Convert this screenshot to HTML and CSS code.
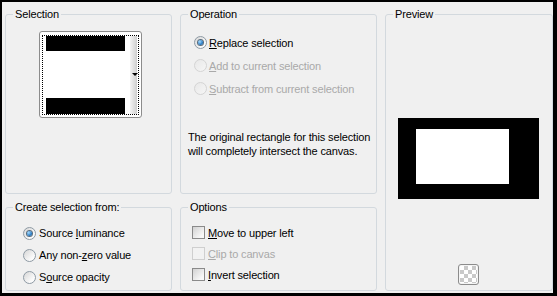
FILE: index.html
```html
<!DOCTYPE html>
<html>
<head>
<meta charset="utf-8">
<link rel="stylesheet" href="styles.css">
</head>
<body>
<div class="frame">
  <div class="layout">
    <fieldset class="group g-selection">
      <legend>Selection</legend>
      <div class="selbox">
        <div class="focus">
          <div class="bars">
            <div class="bar bar-top"></div>
            <div class="bar-mid"></div>
            <div class="bar bar-bottom"></div>
          </div>
          <div class="strip"><span class="arrow"></span></div>
        </div>
      </div>
    </fieldset>

    <fieldset class="group g-operation">
      <legend>Operation</legend>
      <div class="rows op-rows">
        <div class="row"><span class="radio checked"></span><span class="lbl"><u>R</u>eplace selection</span></div>
        <div class="row disabled"><span class="radio"></span><span class="lbl"><u>A</u>dd to current selection</span></div>
        <div class="row disabled"><span class="radio"></span><span class="lbl"><u>S</u>ubtract from current selection</span></div>
      </div>
      <p class="note">The original rectangle for this selection<br>will completely intersect the canvas.</p>
    </fieldset>

    <fieldset class="group g-preview">
      <legend>Preview</legend>
      <div class="pv-canvas"><div class="pv-inner"></div></div>
      <div class="checker-btn"><span class="checker"></span></div>
    </fieldset>

    <fieldset class="group g-create">
      <legend>Create selection from:</legend>
      <div class="rows create-rows">
        <div class="row"><span class="radio checked"></span><span class="lbl">Source <u>l</u>uminance</span></div>
        <div class="row"><span class="radio"></span><span class="lbl">Any non-<u>z</u>ero value</span></div>
        <div class="row"><span class="radio"></span><span class="lbl">S<u>o</u>urce opacity</span></div>
      </div>
    </fieldset>

    <fieldset class="group g-options">
      <legend>Options</legend>
      <div class="rows opt-rows">
        <div class="row"><span class="check"></span><span class="lbl"><u>M</u>ove to upper left</span></div>
        <div class="row disabled"><span class="check"></span><span class="lbl"><u>C</u>lip to canvas</span></div>
        <div class="row"><span class="check"></span><span class="lbl"><u>I</u>nvert selection</span></div>
      </div>
    </fieldset>
  </div>
</div>
</body>
</html>
```

FILE: styles.css
```css
html, body {
  margin: 0;
  padding: 0;
  background: #000;
}

.frame {
  width: 557px;
  height: 296px;
  box-sizing: border-box;
  border-style: solid;
  border-color: #000;
  border-width: 2px 4px 3px 2px;
  background: #f0f0f0;
  font-family: "Liberation Sans", Arial, sans-serif;
  font-size: 11px;
  letter-spacing: -0.15px;
  color: #000;
}

.layout {
  display: grid;
  grid-template-columns: 167px 197px 168px;
  grid-template-rows: 187px 91px;
  column-gap: 8px;
  row-gap: 6px;
  padding: 5px 0 0 3px;
}

.group {
  margin: 0;
  padding: 0;
  min-width: 0;
  border: 1px solid #d3d9de;
  border-radius: 3px;
}

.group legend {
  font-size: 11px;
  line-height: 14px;
  padding: 0 2px;
  margin-left: 7px;
}

.g-selection { grid-column: 1; grid-row: 1; }
.g-operation { grid-column: 2; grid-row: 1; }
.g-preview { grid-column: 3; grid-row: 1 / span 2; }
.g-create { grid-column: 1; grid-row: 2; }
.g-options { grid-column: 2; grid-row: 2; }

/* selection widget */
.selbox {
  width: 103px;
  height: 87px;
  box-sizing: border-box;
  margin: 10px 0 0 33px;
  border: 1px solid #8c8c8c;
  border-radius: 3px;
  background: #fff;
  padding: 3px 2px 2px 2px;
}

.focus {
  box-sizing: border-box;
  width: 97px;
  height: 80px;
  border: 1px dotted #000;
  display: flex;
}

.bars {
  width: 79px;
  margin-left: 3px;
  display: flex;
  flex-direction: column;
}

.bar { background: #000; }
.bar-top { height: 15px; }
.bar-mid { height: 47px; background: #fff; }
.bar-bottom { height: 16px; }

.strip {
  width: 7px;
  margin-left: 5px;
  background: linear-gradient(to right, #f4f4f4, #cfcfcf);
  position: relative;
}

.arrow {
  position: absolute;
  left: 2px;
  top: 37px;
  width: 0;
  height: 0;
  border-left: 3px solid transparent;
  border-right: 3px solid transparent;
  border-top: 3px solid #000;
}

/* rows */
.rows { display: flex; flex-direction: column; }
.row { display: flex; align-items: center; white-space: nowrap; }
.row.disabled .lbl { color: #a9a9a9; }

.op-rows { padding: 10px 0 0 13px; }
.op-rows .row { height: 23px; gap: 2px; }

.create-rows { padding: 8px 0 0 17px; }
.create-rows .row { height: 22px; gap: 3px; }

.opt-rows { padding: 8px 0 0 11px; }
.opt-rows .row { height: 21px; gap: 3px; }

.radio {
  width: 13px;
  height: 13px;
  box-sizing: border-box;
  border-radius: 50%;
  border: 1px solid #8e9aa4;
  background: linear-gradient(135deg, #d6d6d6, #fbfbfb 75%);
  position: relative;
  flex: none;
}

.radio.checked::after {
  content: "";
  position: absolute;
  left: 3px;
  top: 3px;
  width: 5px;
  height: 5px;
  border-radius: 50%;
  background: radial-gradient(circle at 35% 35%, #a6dcff, #2a7cc4 60%, #134f86);
  box-shadow: 0 0 0 1px #5b6d7c;
}

.row.disabled .radio {
  border-color: #d4d4d4;
  background: linear-gradient(135deg, #e8e8e8, #f6f6f6);
}

.check {
  width: 13px;
  height: 13px;
  box-sizing: border-box;
  border: 1px solid #8a8a8a;
  background: linear-gradient(135deg, #d2d2d2, #f8f8f8 80%);
  flex: none;
}

.row.disabled .check {
  border-color: #cfcfcf;
  background: #f2f2f2;
}

.note {
  margin: 30px 0 0 7px;
  line-height: 14px;
  white-space: nowrap;
}

/* preview */
.pv-canvas {
  width: 141px;
  height: 81px;
  margin: 97px 0 0 12px;
  background: #000;
  padding: 11px 0 0 18px;
  box-sizing: border-box;
}

.pv-inner {
  width: 93px;
  height: 55px;
  background: #fff;
}

.checker-btn {
  width: 21px;
  height: 21px;
  box-sizing: border-box;
  margin: 65px 0 0 72px;
  border: 1px solid #8c8c8c;
  border-radius: 3px;
  padding: 1px;
  background: #f4f4f4;
}

.checker {
  display: block;
  width: 17px;
  height: 17px;
  background-color: #fff;
  background-image: conic-gradient(#c9c9c9 25%, #fff 0 50%, #c9c9c9 0 75%, #fff 0);
  background-size: 8px 8px;
  background-position: 0 0;
}
```
